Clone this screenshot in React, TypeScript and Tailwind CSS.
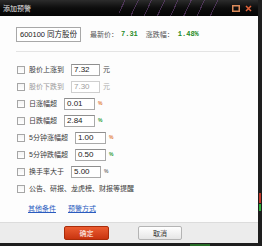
import React from "react";

type RowProps = {
  label: string;
  value: string;
  unit: string;
  unitClass: string;
  inputW: string;
  dim?: boolean;
};

function Row({ label, value, unit, unitClass, inputW, dim }: RowProps) {
  return (
    <div className="flex h-[17px] items-center">
      <div className="h-[8px] w-[8px] border border-[#a6a6a6] bg-gradient-to-b from-[#f4f4f4] to-white" />
      <span className={`ml-[4px] text-[7px] leading-none ${dim ? "text-[#9a9a9a]" : "text-[#3a3a3a]"}`}>{label}</span>
      <div
        className={`ml-[7px] flex h-[12px] items-center border pl-[2px] text-[8px] leading-none ${inputW} ${
          dim ? "border-[#cfcfcf] text-[#a0a0a0]" : "border-[#a9a9a9] border-t-[#8e8e8e] text-[#222]"
        } bg-white`}
      >
        {value}
      </div>
      <span className={`ml-[3px] leading-none ${unitClass}`}>{unit}</span>
    </div>
  );
}

export default function App() {
  return (
    <div className="relative h-[246px] w-[262px] overflow-hidden bg-[#1e1e1e] font-['Liberation_Sans','Noto_Sans_CJK_SC',sans-serif]">
      <div className="flex h-[243px] w-[258px] flex-col">
        {/* Title bar */}
        <div className="flex h-[16px] items-center bg-gradient-to-b from-[#2c2c2c] via-[#0d0d0d] to-[#050505]">
          <span className="ml-[3px] text-[7px] leading-none text-[#e6e6e6]">添加预警</span>
          <div className="ml-[88px] h-full w-[100px] bg-[repeating-linear-gradient(115deg,transparent_0px,transparent_5px,rgba(130,80,150,0.6)_5px,rgba(130,80,150,0.6)_6px,transparent_6px,transparent_12px)] opacity-80" />
          <div className="flex-1" />
          <svg width="8" height="7" viewBox="0 0 8 7" className="mr-[5px]">
            <rect x="0.75" y="0.75" width="6.5" height="5.5" fill="none" stroke="#d98a5a" strokeWidth="1.5" />
          </svg>
          <svg width="7" height="7" viewBox="0 0 7 7" className="mr-[6px]">
            <path d="M1 1 L6 6 M6 1 L1 6" stroke="#e0623a" strokeWidth="1.5" />
          </svg>
        </div>

        {/* Body */}
        <div className="flex flex-1 flex-col bg-[#fdfdfd] pl-[16px]">
          <div className="mt-[11px] flex items-center">
            <div className="flex h-[15px] w-[65px] items-center border border-[#a8a8a8] bg-white pl-[3px] text-[7.5px] leading-none text-[#222]">
              600100 同方股份
            </div>
            <span className="ml-[9px] text-[7px] leading-none text-[#555]">最新价：</span>
            <span className="ml-[3px] font-['Liberation_Mono',monospace] text-[7px] font-bold leading-none text-[#1f8a24]">7.31</span>
            <span className="ml-[8px] text-[7px] leading-none text-[#555]">涨跌幅：</span>
            <span className="ml-[4px] font-['Liberation_Mono',monospace] text-[7px] font-bold leading-none text-[#1f8a24]">1.48%</span>
          </div>
          <div className="mt-[9px] h-px w-[224px] bg-[#e4e4e4]" />

          <div className="mt-[9px] flex flex-col pl-[1px]">
            <Row label="股价上涨到" value="7.32" unit="元" unitClass="text-[7px] text-[#444]" inputW="w-[29px]" />
            <Row label="股价下跌到" value="7.30" unit="元" unitClass="text-[7px] text-[#aaa]" inputW="w-[29px]" dim />
            <Row label="日涨幅超" value="0.01" unit="%" unitClass="text-[5px] font-bold text-[#e07a3a]" inputW="w-[31px]" />
            <Row label="日跌幅超" value="2.84" unit="%" unitClass="text-[5px] font-bold text-[#2a9a3a]" inputW="w-[31px]" />
            <Row label="5分钟涨幅超" value="1.00" unit="%" unitClass="text-[5px] font-bold text-[#e07a3a]" inputW="w-[31px]" />
            <Row label="5分钟跌幅超" value="0.50" unit="%" unitClass="text-[5px] font-bold text-[#2a9a3a]" inputW="w-[31px]" />
            <Row label="换手率大于" value="5.00" unit="%" unitClass="text-[5px] font-bold text-[#777]" inputW="w-[30px]" />
            <div className="flex h-[17px] items-center">
              <div className="h-[8px] w-[8px] border border-[#a6a6a6] bg-gradient-to-b from-[#f4f4f4] to-white" />
              <span className="ml-[4px] text-[7px] leading-none text-[#3a3a3a]">公告、研报、龙虎榜、财报等提醒</span>
            </div>
          </div>

          <div className="mt-[3px] flex h-[17px] items-center pl-[12px]">
            <span className="text-[7px] leading-none text-[#2a5cbf] underline">其他条件</span>
            <span className="ml-[12px] text-[7px] leading-none text-[#2a5cbf] underline">预警方式</span>
          </div>
        </div>

        {/* Footer */}
        <div className="flex h-[21px] items-center border-t border-[#dcdcdc] bg-[#ececec]">
          <button className="ml-[64px] flex h-[14px] w-[45px] items-center justify-center rounded-[2px] border border-[#a92c0a] bg-gradient-to-b from-[#ec5c30] to-[#c8340f] text-[7px] leading-none text-white">
            确定
          </button>
          <button className="ml-[29px] flex h-[14px] w-[44px] items-center justify-center rounded-[2px] border border-[#b4b4b4] bg-gradient-to-b from-white to-[#e6e6e6] text-[7px] leading-none text-[#333]">
            取消
          </button>
        </div>
      </div>
      <div className="absolute right-[1px] top-[193px] h-[10px] w-[2px] bg-[#c0392b]" />
      <div className="absolute right-[1px] top-[204px] h-[7px] w-[2px] bg-[#2faa3a]" />
      <div className="absolute bottom-0 left-[190px] h-[2px] w-[20px] bg-[#2a8a2a] opacity-70" />
    </div>
  );
}
